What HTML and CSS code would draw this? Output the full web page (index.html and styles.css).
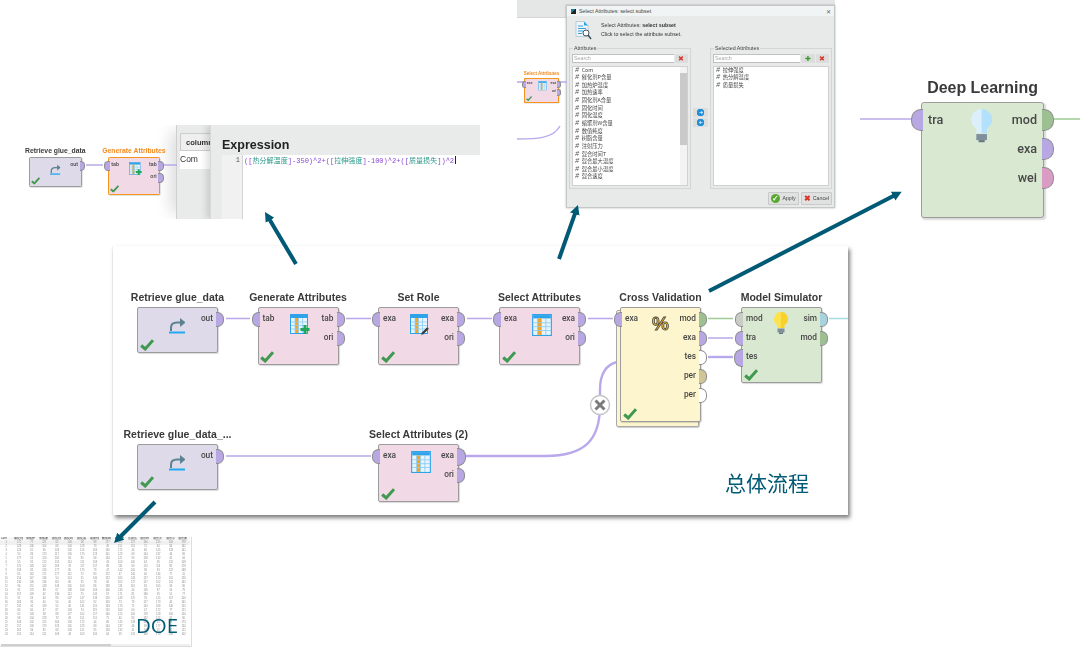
FILE: index.html
```html
<!DOCTYPE html>
<html lang="zh">
<head>
<meta charset="utf-8">
<title>总体流程</title>
<link rel="stylesheet" href="styles.css">
</head>
<body>
<svg class="defs" width="0" height="0" aria-hidden="true">
  <defs>
    <symbol id="grid" viewBox="0 0 18 20">
      <rect x=".5" y=".5" width="17" height="19" fill="#e6f4fd" stroke="#2fa3ea"/>
      <rect x="1" y="1" width="16" height="3" fill="#2fa3ea"/>
      <rect x="5" y="4" width="3.5" height="15" fill="#f8a51e"/>
      <path d="M1 8h16M1 11.500h16M1 15h16M5 4v15M8.500 4v15M12.500 4v15" stroke="#8fcdf3" stroke-width=".8" fill="none"/>
    </symbol>
    <symbol id="grid-plus" viewBox="0 0 22 22">
      <use href="#grid" width="18" height="20"/>
      <path d="M15 11v9M10.500 15.500h9" stroke="#22a75a" stroke-width="3" fill="none"/>
    </symbol>
    <symbol id="grid-pen" viewBox="0 0 22 22">
      <use href="#grid" width="18" height="20"/>
      <path d="M12 20l6-6" stroke="#3b3b3b" stroke-width="2.400" fill="none"/>
      <path d="M11 21l1.500-1" stroke="#888" stroke-width="1" fill="none"/>
    </symbol>
    <symbol id="fetch" viewBox="0 0 16 17">
      <rect y="14.500" width="16" height="2" fill="#22a7f0"/>
      <path d="M2 14V10.500Q2 5.500 8 5.500H12" stroke="#5c8292" stroke-width="2" fill="none"/>
      <path d="M11 1l5.500 4.500L11 10z" fill="#5c8292"/>
    </symbol>
    <symbol id="tick" viewBox="0 0 14 12">
      <path d="M1.200 6.500L5.200 10L13 1.200" stroke="#3f9a50" stroke-width="3" fill="none"/>
    </symbol>
    <symbol id="bulb" viewBox="0 0 14 22">
      <path d="M7 0A7 7 0 0 0 3.500 13V16H7z" fill="var(--bulb-a)"/>
      <path d="M7 0A7 7 0 0 1 10.500 13V16H7z" fill="var(--bulb-b)"/>
      <rect x="3.500" y="16.500" width="7" height="4" fill="#7f8f9c"/>
      <rect x="5" y="20.500" width="4" height="1.500" fill="#66747f"/>
    </symbol>
    <marker id="head" markerWidth="3" markerHeight="3" refX="1" refY="1.250" orient="auto" markerUnits="strokeWidth">
      <path d="M0 0L2.400 1.250L0 2.500z" fill="#005a75"/>
    </marker>
  </defs>
</svg>

<main class="canvas">

  <!-- DOE data table -->
  <section class="doe">
    <table class="doe-table">
      <thead><tr id="doe-head"></tr></thead>
      <tbody id="doe-body"></tbody>
    </table>
    <div class="doe-scroll"><i></i></div>
  </section>

  <!-- Expression editor -->
  <section class="expr">
    <div class="expr-side">
      <div class="expr-col">column</div>
      <div class="expr-com">Com</div>
    </div>
    <div class="expr-main">
      <h2 class="expr-title">Expression</h2>
      <div class="expr-editor">
        <div class="expr-gutter">1</div>
        <div class="expr-code"><b>([</b><em>热分解温度</em><b>]-350)^2+([</b><em>拉伸强度</em><b>]-100)^2+([</b><em>质量损失</em><b>])^2</b><u></u></div>
      </div>
    </div>
  </section>

  <!-- Select subset dialog -->
  <div class="backdrop"></div>
  <section class="dialog">
    <header class="dlg-bar">
      <span class="dlg-logo"></span>
      <span class="dlg-name">Select Attributes: select subset</span>
      <span class="dlg-close">✕</span>
    </header>
    <div class="dlg-head">
      <svg class="dlg-ico" viewBox="0 0 17 19">
        <path d="M1 .5h8l4 4v11H1z" fill="#eef5fa" stroke="#9db7c8" stroke-width=".6"/>
        <path d="M9 .5v4h4z" fill="#2fa3ea"/>
        <path d="M3 5h5M3 7.500h8M3 10h5M3 12.500h4" stroke="#3a9fd8" stroke-width="1"/>
        <circle cx="11" cy="12" r="3" fill="#fff" stroke="#44525c" stroke-width="1"/>
        <path d="M13 14l3 4" stroke="#44525c" stroke-width="1.600"/>
      </svg>
      <div class="dlg-text">
        <p>Select Attributes: <b>select subset</b></p>
        <p>Click to select the attribute subset.</p>
      </div>
    </div>
    <div class="dlg-cols">
      <fieldset class="dlg-group">
        <legend>Attributes</legend>
        <div class="dlg-search">
          <span class="dlg-input">Search</span>
          <span class="dlg-btn dlg-x">✖</span>
        </div>
        <div class="dlg-list-wrap">
          <ul class="dlg-list">
            <li>Com</li><li>催化剂P含量</li><li>加热炉温度</li><li>加热速率</li><li>固化剂A含量</li><li>固化时间</li><li>固化温度</li><li>缩聚剂W含量</li><li>数值纯度</li><li>树脂含量</li><li>注射压力</li><li>混合时间T</li><li>混合最大温度</li><li>混合最小温度</li><li>混合速度</li>
          </ul>
          <div class="dlg-scrollbar"><i></i></div>
        </div>
      </fieldset>
      <div class="dlg-move">
        <span class="dlg-mv">➜</span>
        <span class="dlg-mv dlg-mv-back">➜</span>
      </div>
      <fieldset class="dlg-group">
        <legend>Selected Attributes</legend>
        <div class="dlg-search">
          <span class="dlg-input">Search</span>
          <span class="dlg-btn dlg-plus">✚</span>
          <span class="dlg-btn dlg-x">✖</span>
        </div>
        <div class="dlg-list-wrap">
          <ul class="dlg-list">
            <li>拉伸强度</li><li>热分解温度</li><li>质量损失</li>
          </ul>
        </div>
      </fieldset>
    </div>
    <footer class="dlg-foot">
      <span class="dlg-action"><i class="dlg-ok">✓</i>Apply</span>
      <span class="dlg-action"><i class="dlg-no">✖</i>Cancel</span>
    </footer>
  </section>

  <!-- Main process panel -->
  <section class="panel"></section>

  <svg class="layer" viewBox="0 0 1080 665" aria-hidden="true">
    <g class="w w-p">
      <path d="M86 165H103M161 165H177"/>
      <path d="M517 82H524M559 82H567"/>
      <path d="M517 139C535 139 553 139 560 126"/>
      <path d="M226 318.500H250M346 318.500H371M467 318.500H492M588 318.500H613"/>
      <path d="M708 338H733"/>
      <path class="w-thick" d="M708 357H733"/>
      <path d="M226 456H371"/>
      <path class="w-thick" d="M466 456H545C585 456 600 440 600 405V390C600 375 605 365 617 362"/>
      <path d="M860 119H912"/>
    </g>
    <path class="w w-g" d="M708 318.500H733M1054 119H1080"/>
    <path class="w w-t" d="M829 318.500H848"/>
    <circle cx="600" cy="405" r="9.500" fill="#fff" stroke="#c6c6c6" stroke-width="1.500"/>
    <path d="M595.500 400.500l9 9M604.500 400.500l-9 9" stroke="#7b7b7b" stroke-width="3"/>
  </svg>

  <!-- Mini scene: generate attributes -->
  <div class="zoomwrap wrap-mini"><div class="mini-row">
    <article class="op op-static">
      <h3 class="op-title">Retrieve glue_data</h3>
      <div class="box box-io h1">
        <div class="ports out"><span class="port p-exa">out</span></div>
        <svg class="ico ico-fetch"><use href="#fetch"/></svg>
        <svg class="tick"><use href="#tick"/></svg>
      </div>
    </article>
    <article class="op op-static">
      <h3 class="op-title t-orange">Generate Attributes</h3>
      <div class="box box-pink h2 b-orange">
        <div class="ports in"><span class="port p-exa">tab</span></div>
        <div class="ports out"><span class="port p-exa">tab</span><span class="port p-exa">ori</span></div>
        <svg class="ico ico-grid"><use href="#grid-plus"/></svg>
        <svg class="tick"><use href="#tick"/></svg>
      </div>
    </article>
  </div></div>

  <!-- Mini scene: select attributes -->
  <div class="zoomwrap wrap-tiny"><div class="tiny-row">
    <article class="op op-static">
      <h3 class="op-title t-orange">Select Attributes</h3>
      <div class="box box-pink h2 b-orange">
        <div class="ports in"><span class="port p-exa">exa</span></div>
        <div class="ports out"><span class="port p-exa">exa</span><span class="port p-exa">ori</span></div>
        <svg class="ico ico-grid"><use href="#grid"/></svg>
        <svg class="tick"><use href="#tick"/></svg>
      </div>
    </article>
  </div></div>

  <!-- Deep learning close-up -->
  <div class="zoomwrap wrap-deep"><div class="deep-row">
    <article class="op op-static">
      <h3 class="op-title">Deep Learning</h3>
      <div class="box box-green h3">
        <div class="ports in"><span class="port p-exa">tra</span></div>
        <div class="ports out"><span class="port p-mod">mod</span><span class="port p-exa">exa</span><span class="port p-wei">wei</span></div>
        <svg class="ico ico-bulb bulb-blue"><use href="#bulb"/></svg>
      </div>
    </article>
  </div></div>

  <!-- Main process operators -->
  <article class="op n-retrieve">
    <h3 class="op-title">Retrieve glue_data</h3>
    <div class="box box-io h1">
      <div class="ports out"><span class="port p-exa">out</span></div>
      <svg class="ico ico-fetch"><use href="#fetch"/></svg>
      <svg class="tick"><use href="#tick"/></svg>
    </div>
  </article>
  <article class="op n-generate">
    <h3 class="op-title">Generate Attributes</h3>
    <div class="box box-pink h2">
      <div class="ports in"><span class="port p-exa">tab</span></div>
      <div class="ports out"><span class="port p-exa">tab</span><span class="port p-exa">ori</span></div>
      <svg class="ico ico-grid"><use href="#grid-plus"/></svg>
      <svg class="tick"><use href="#tick"/></svg>
    </div>
  </article>
  <article class="op n-role">
    <h3 class="op-title">Set Role</h3>
    <div class="box box-pink h2">
      <div class="ports in"><span class="port p-exa">exa</span></div>
      <div class="ports out"><span class="port p-exa">exa</span><span class="port p-exa">ori</span></div>
      <svg class="ico ico-grid"><use href="#grid-pen"/></svg>
      <svg class="tick"><use href="#tick"/></svg>
    </div>
  </article>
  <article class="op n-select">
    <h3 class="op-title">Select Attributes</h3>
    <div class="box box-pink h2">
      <div class="ports in"><span class="port p-exa">exa</span></div>
      <div class="ports out"><span class="port p-exa">exa</span><span class="port p-exa">ori</span></div>
      <svg class="ico ico-grid"><use href="#grid"/></svg>
      <svg class="tick"><use href="#tick"/></svg>
    </div>
  </article>
  <article class="op n-cross">
    <h3 class="op-title">Cross Validation</h3>
    <div class="stack">
      <div class="box box-yellow h5">
        <div class="ports in"><span class="port p-exa">exa</span></div>
        <div class="ports out"><span class="port p-mod">mod</span><span class="port p-exa">exa</span><span class="port p-off">tes</span><span class="port p-per">per</span><span class="port p-off">per</span></div>
        <span class="pct">%</span>
        <svg class="tick"><use href="#tick"/></svg>
      </div>
    </div>
  </article>
  <article class="op n-sim">
    <h3 class="op-title">Model Simulator</h3>
    <div class="box box-green h3">
      <div class="ports in"><span class="port p-half">mod</span><span class="port p-exa">tra</span><span class="port p-exa p-big">tes</span></div>
      <div class="ports out"><span class="port p-sim">sim</span><span class="port p-mod">mod</span></div>
      <svg class="ico ico-bulb bulb-yellow"><use href="#bulb"/></svg>
      <svg class="tick"><use href="#tick"/></svg>
    </div>
  </article>
  <article class="op n-retrieve2">
    <h3 class="op-title">Retrieve glue_data_...</h3>
    <div class="box box-io h1">
      <div class="ports out"><span class="port p-exa">out</span></div>
      <svg class="ico ico-fetch"><use href="#fetch"/></svg>
      <svg class="tick"><use href="#tick"/></svg>
    </div>
  </article>
  <article class="op n-select2">
    <h3 class="op-title">Select Attributes (2)</h3>
    <div class="box box-pink h2">
      <div class="ports in"><span class="port p-exa">exa</span></div>
      <div class="ports out"><span class="port p-exa p-big">exa</span><span class="port p-exa">ori</span></div>
      <svg class="ico ico-grid"><use href="#grid"/></svg>
      <svg class="tick"><use href="#tick"/></svg>
    </div>
  </article>

  <p class="cap cap-flow">总体流程</p>
  <p class="cap cap-doe">DOE</p>

  <svg class="layer" viewBox="0 0 1080 665" aria-hidden="true">
    <g class="arrows">
      <path d="M296 264L267.900 216.800"/>
      <path d="M559 259L576.100 210.300"/>
      <path d="M709 291L896.700 194.300"/>
      <path d="M155 502L118 539"/>
    </g>
  </svg>
</main>
<script src="table.js"></script>
</body>
</html>
```
FILE: styles.css
```css
* { box-sizing: border-box; }
html, body { margin: 0; padding: 0; background: #fff; }
body { font-family: "Liberation Sans", Arial, sans-serif; color: #333; }
.defs { position: absolute; }
.canvas { position: relative; width: 1080px; height: 665px; overflow: hidden; background: #fff; }
.layer { position: absolute; left: 0; top: 0; width: 1080px; height: 665px; pointer-events: none; }

/* wires */
.w { fill: none; stroke-width: 1.5; }
.w-p { stroke: #b9a9ea; }
.w-thick { stroke-width: 2.4; }
.w-g { stroke: #9fcb95; }
.w-t { stroke: #a6dbe0; }
.arrows path { fill: none; stroke: #005a75; stroke-width: 4; marker-end: url(#head); }

/* main panel */
.panel { position: absolute; left: 113px; top: 246px; width: 735px; height: 269px; background: #fff; box-shadow: 2px 3px 4px rgba(0,0,0,.5), -1px 0 1px rgba(0,0,0,.04); }

/* operators */
.op { position: absolute; width: 81px; display: flex; flex-direction: column; align-items: center; filter: blur(.25px); }
.op-static { position: relative; filter: none; }
.op-title { margin: 0 0 3px; height: 14px; line-height: 14px; font-size: 10.500px; font-weight: 700; white-space: nowrap; color: #3a3a3a; }
.t-orange { color: #f5891f; }
.box { position: relative; width: 81px; border: 1px solid #9c9c9c; border-radius: 2px; box-shadow: 1px 1px 1px rgba(0,0,0,.15); }
.box-io { background: #dedaea; }
.box-pink { background: #f1d9e6; }
.box-yellow { background: #fdf5cd; }
.box-green { background: #d9e8d0; }
.b-orange { border: 1.5px solid #f7941d; }
.h1 { height: 46px; }
.h2 { height: 58px; }
.h3 { height: 76px; }
.h5 { height: 115px; }

.n-retrieve { left: 137px; top: 290px; }
.n-generate { left: 257.500px; top: 290px; }
.n-role { left: 378px; top: 290px; }
.n-select { left: 499px; top: 290px; }
.n-cross { left: 620px; top: 290px; }
.n-sim { left: 741px; top: 290px; }
.n-retrieve2 { left: 137px; top: 427px; }
.n-select2 { left: 378px; top: 427px; }

.stack { position: relative; width: 81px; }
.stack::before { content: ""; position: absolute; left: -4px; top: 3px; width: 81px; height: 115px; background: #fdf5cd; border: 1px solid #a8a8a8; border-radius: 2px; box-shadow: 1px 1px 1px rgba(0,0,0,.2); }

.ports { position: absolute; top: 3px; display: flex; flex-direction: column; gap: 4px; }
.ports.in { left: 0; align-items: flex-start; }
.ports.out { right: 0; align-items: flex-end; }
.port { position: relative; display: block; height: 15px; line-height: 15px; padding: 0 4px; font-family: Roboto, sans-serif; font-weight: 500; font-size: 8.300px; color: #484848; }
.port::after { content: ""; position: absolute; top: 1px; width: 7px; height: 13px; border: 1px solid #8e8e8e; background: var(--pc); }
.out .port::after { right: -7px; border-left: 0; border-radius: 0 6.500px 6.500px 0; }
.in .port::after { left: -7px; border-right: 0; border-radius: 6.500px 0 0 6.500px; }
.p-exa { --pc: #b7a7e2; }
.p-mod { --pc: #9dc092; }
.p-wei { --pc: #d99cc4; }
.p-off { --pc: #fff; }
.p-per { --pc: #cfc596; }
.p-sim { --pc: #a6d3dc; }
.p-half { --pc: #c9cdc6; }
.port.p-big::after { top: -.5px; width: 8px; height: 16px; }
.out .port.p-big::after { right: -8px; border-radius: 0 8px 8px 0; }
.in .port.p-big::after { left: -8px; border-radius: 8px 0 0 8px; }

.ico { position: absolute; }
.ico-fetch { left: 31px; top: 9px; width: 16px; height: 17px; }
.ico-grid { left: 31px; top: 6px; width: 22px; height: 22px; }
.ico-bulb { left: 32px; top: 4px; width: 14px; height: 22px; }
.bulb-yellow { --bulb-a: #fde24c; --bulb-b: #f9d02c; }
.bulb-blue { --bulb-a: #dcf0fb; --bulb-b: #b3e0fb; }
.tick { position: absolute; left: 1.500px; bottom: 1.500px; width: 14px; height: 12px; }
.pct { position: absolute; left: 31px; top: 3px; font-family: "Liberation Sans", sans-serif; font-size: 19px; line-height: 26px; font-weight: 700; color: #f6b420; -webkit-text-stroke: .8px #4a4a4a; }

/* scaled copies */
.zoomwrap { position: absolute; }
.wrap-mini { left: 29px; top: 146px; filter: blur(.3px); }
.mini-row { zoom: .65; display: flex; gap: 40px; }
.wrap-tiny { left: 524px; top: 70.500px; filter: blur(.3px); }
.tiny-row { zoom: .43; display: flex; }
.wrap-deep { left: 921px; top: 76.500px; filter: blur(.3px); }
.deep-row { zoom: 1.52; display: flex; }
.wrap-deep .port { line-height: 16px; }

/* expression */
.expr { position: absolute; left: 176px; top: 125px; width: 304px; height: 94px; display: flex; background: #e9eaea; box-shadow: -12px 0 14px -6px rgba(0,0,0,.13); clip-path: inset(0 0 0 -30px); filter: blur(.25px); }
.expr-side { width: 34px; padding-top: 8px; border-left: 1px solid #cfcfcf; }
.expr-col { height: 18px; margin-left: 3px; padding-left: 5px; line-height: 17px; font-size: 7.600px; font-weight: 700; color: #333; background: #efefef; border: 1px solid #ccc; border-right: 0; border-radius: 2px 0 0 0; overflow: hidden; }
.expr-com { height: 18px; margin-left: 3px; line-height: 16px; font-size: 8.500px; background: #fff; }
.expr-main { flex: 1; min-width: 0; display: flex; flex-direction: column; background: #e9eaea; border-left: 1px solid #d8d8d8; box-shadow: -4px 0 6px rgba(0,0,0,.12); }
.expr-title { margin: 0; height: 30px; padding: 13px 0 0 11px; line-height: 14px; font-size: 12.500px; font-weight: 700; color: #222; }
.expr-editor { flex: 1; margin-left: 11px; display: flex; background: #fff; }
.expr-gutter { width: 21px; padding: 0 2px 0 0; text-align: right; font: 7px/10px "Liberation Mono", monospace; color: #555; background: #f1f1f1; border-right: 1px solid #d4d4d4; }
.expr-code { padding: 0 0 0 1px; white-space: nowrap; font: 7.050px/10px "Liberation Mono", "Noto Sans CJK SC", monospace; color: #8a48d8; }
.expr-code b { font-weight: 400; }
.expr-code em { font-style: normal; font-family: "Noto Sans CJK SC", sans-serif; color: #2e9a8a; }
.expr-code u { display: inline-block; width: 1px; height: 8px; margin-left: 1px; vertical-align: -1px; background: #1a1a80; }

/* dialog */
.backdrop { position: absolute; left: 517px; top: 0; width: 318px; height: 18px; background: #e5e7e7; border-bottom: 1px solid #d6d6d6; }
.dialog { position: absolute; left: 566px; top: 5px; width: 269px; height: 203px; display: flex; flex-direction: column; font-size: 5.300px; color: #444; background: #e8eaea; border: 1px solid #c4c8c8; box-shadow: 0 0 2px rgba(0,0,0,.3); filter: blur(.25px); }
.dlg-bar { height: 10px; flex: none; display: flex; align-items: center; gap: 3px; padding: 0 3px 0 4px; background: #f1f4f5; }
.dlg-logo { width: 5px; height: 5px; background: linear-gradient(135deg, #1a7c9a 50%, #222 50%); }
.dlg-name { flex: 1; }
.dlg-close { font-size: 6px; color: #666; }
.dlg-head { height: 30px; flex: none; display: flex; padding: 5px 0 0 8px; gap: 9px; }
.dlg-ico { width: 17px; height: 19px; }
.dlg-text p { margin: 0 0 1.500px; line-height: 6px; padding-top: 1px; color: #333; }
.dlg-cols { flex: 1; min-height: 0; display: flex; padding: 0 2px; gap: 2px; }
.dlg-group { flex: 1; min-width: 0; margin: 0; padding: 3px 2px 2px; display: flex; flex-direction: column; gap: 3px; border: 1px solid #d4d6d6; }
.dlg-group legend { padding: 0 1px; margin-left: 1px; font-size: 5.300px; line-height: 5px; }
.dlg-search { display: flex; gap: 1px; height: 9px; flex: none; }
.dlg-input { flex: 1; background: #fff; color: #a8a8a8; padding-left: 1px; border: 1px solid #c0c0c0; border-width: 1px 0 1px 1px; line-height: 7px; }
.dlg-btn { width: 13.500px; flex: none; text-align: center; line-height: 9px; font-size: 7px; background: #dcdede; border-radius: 1px; }
.dlg-x { color: #d8362a; }
.dlg-plus { color: #3d9a2f; }
.dlg-list-wrap { flex: 1; min-height: 0; position: relative; background: #fff; border: 1px solid #d0d0d0; overflow: hidden; }
.dlg-list { list-style: none; margin: -.5px 0 0; padding: 0 0 0 2px; font-family: "Noto Sans CJK SC", "Liberation Sans", sans-serif; }
.dlg-list li { height: 7.650px; line-height: 7.650px; white-space: nowrap; color: #444; }
.dlg-list li::before { content: "#"; margin-right: 2.500px; font-style: italic; font-family: "Liberation Mono", monospace; font-size: 7px; color: #555; }
.dlg-scrollbar { position: absolute; right: 0; top: 0; bottom: 0; width: 7px; padding: 6px 0 40px; background: #f3f3f3; }
.dlg-scrollbar i { display: block; height: 100%; background: #c9c9c9; }
.dlg-move { width: 15px; flex: none; display: flex; flex-direction: column; justify-content: center; gap: 1px; }
.dlg-mv { height: 9px; text-align: center; line-height: 9px; font-size: 5px; color: #fff; background: radial-gradient(circle, #1f8fd8 0 3.500px, #dcdede 4px); }
.dlg-mv-back { transform: scaleX(-1); }
.dlg-foot { height: 18px; flex: none; display: flex; justify-content: flex-end; align-items: center; gap: 2px; padding: 0 2px 0 0; }
.dlg-action { display: inline-flex; align-items: center; justify-content: center; gap: 2px; width: 31px; height: 13px; background: #e0e2e2; border: 1px solid #c9c9c9; border-radius: 1px; }
.dlg-action i { font-style: normal; font-size: 8px; line-height: 9px; font-weight: 700; }
.dlg-ok { width: 9px; height: 9px; text-align: center; color: #fff; background: #5aa832; border-radius: 50%; }
.dlg-no { color: #d8362a; }

/* DOE table */
.doe { position: absolute; left: 0; top: 537px; width: 192px; height: 110px; background: #fff; border-right: 1px solid #ddd; border-bottom: 1px solid #ddd; overflow: hidden; filter: blur(.4px); }
.doe-table { border-collapse: collapse; table-layout: fixed; width: 190px; font-size: 2.600px; line-height: 4px; color: #8a8a8a; }
.doe-table th { height: 4px; padding: 0 0 0 1px; font-weight: 700; color: #666; text-align: left; background: #f6f6f6; overflow: hidden; white-space: nowrap; }
.doe-table td { height: 4px; padding: 0; text-align: center; }
.doe-table tbody tr:first-child td { background: #f0f0f0; }
.doe-scroll { position: absolute; left: 1px; right: 1px; bottom: 0; height: 2px; background: #efefef; }
.doe-scroll i { display: block; width: 110px; height: 2px; background: #cfcfcf; }

.cap { position: absolute; margin: 0; color: #005a75; white-space: nowrap; }
.cap-flow { left: 725px; top: 467px; font: 400 21px/30px "Noto Sans CJK SC", sans-serif; }
.cap-doe { left: 136px; top: 610px; font: 400 20.500px/30px "Open Sans", sans-serif; }
```
FILE: table.js
```js
var head = document.getElementById('doe-head');
var body = document.getElementById('doe-body');
var names = ['Com', '催化剂', '加热炉', '加热速', '固化剂', '固化时', '固化温', '缩聚剂', '数值纯', '树脂含', '注射压', '混合时', '混合大', '混合小', '混合速'];
names.forEach(function (n) {
  var th = document.createElement('th');
  th.textContent = n;
  head.appendChild(th);
});
var seed = 7;
function next() {
  seed = (seed * 73 + 41) % 997;
  return seed;
}
for (var r = 1; r <= 24; r++) {
  var tr = document.createElement('tr');
  for (var c = 0; c < names.length; c++) {
    var td = document.createElement('td');
    td.textContent = c === 0 ? r : 40 + next() % 140;
    tr.appendChild(td);
  }
  body.appendChild(tr);
}
```
